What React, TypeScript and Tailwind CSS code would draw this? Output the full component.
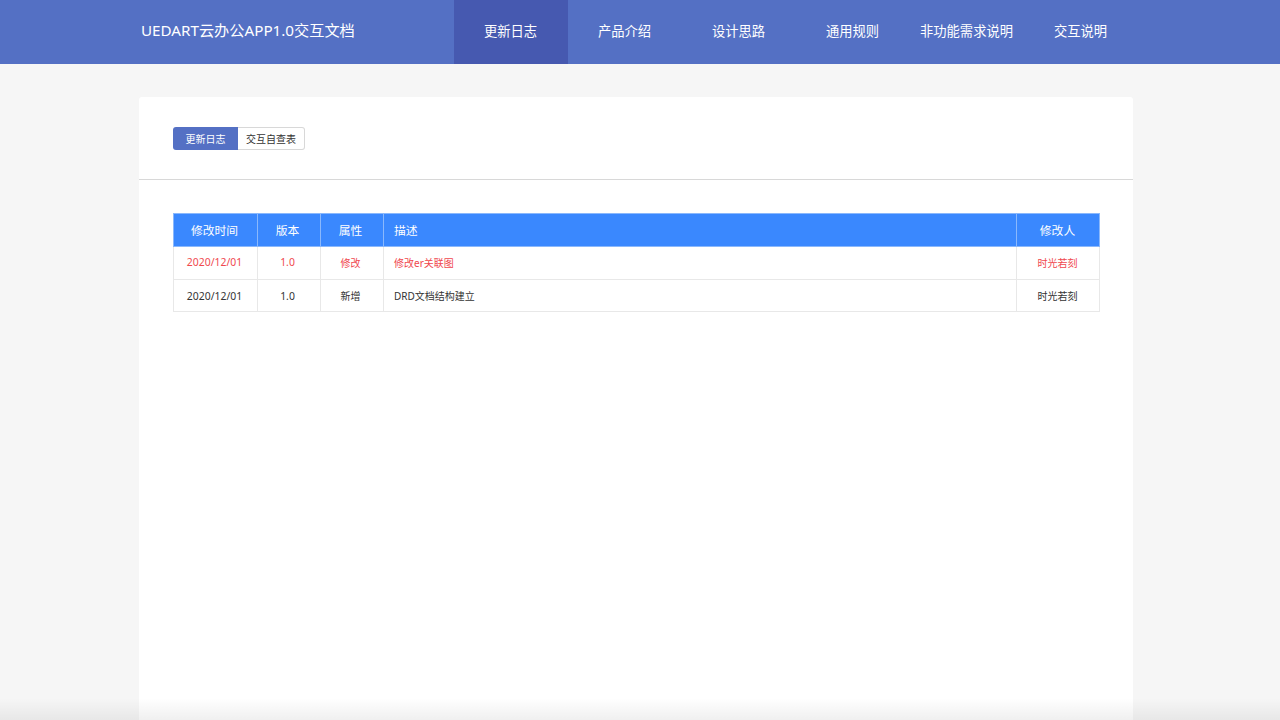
const navItems = ["更新日志", "产品介绍", "设计思路", "通用规则", "非功能需求说明", "交互说明"]

const rows = [
  { date: "2020/12/01", version: "1.0", type: "修改", desc: "修改er关联图", author: "时光若刻", color: "text-[#f0484e]", height: "h-[33px]" },
  { date: "2020/12/01", version: "1.0", type: "新增", desc: "DRD文档结构建立", author: "时光若刻", color: "text-[#333333] [&>td]:pt-[2px]", height: "h-[32px]" },
]

export default function App() {
  return (
    <div className="relative h-[720px] overflow-hidden bg-[#f6f6f6] font-['Noto_Sans','Noto_Sans_CJK_SC',sans-serif]">
      {/* top bar */}
      <header className="flex h-16 bg-[#5470c4] pl-[141px] text-white">
        <div className="w-[312.5px] text-[15.2px] leading-[61px]">UEDART云办公APP1.0交互文档</div>
        <nav className="flex">
          {navItems.map((item, i) => (
            <div
              key={item}
              className={`w-[114px] text-center text-[13.3px] leading-[63px] ${i === 0 ? "bg-[#4659b0]" : ""}`}
            >
              {item}
            </div>
          ))}
        </nav>
      </header>

      {/* card */}
      <main className="ml-[139px] mt-[33px] h-[640px] w-[994px] rounded-t-[3px] bg-white">
        <div className="h-[83px] border-b border-[#d8d8d8] pl-[34px] pt-[30px]">
          <div className="flex h-[23px] w-[132px] text-[10px] leading-[25px]">
            <div className="w-[65px] rounded-l-[3px] bg-[#5470c4] text-center text-white">更新日志</div>
            <div className="w-[67px] rounded-r-[3px] border border-l-0 border-[#d8d8d8] text-center leading-[23px] text-[#333333]">
              交互自查表
            </div>
          </div>
        </div>

        <div className="pl-[34px] pt-[33px]">
          <table className="w-[927px] table-fixed border-collapse text-[10px] text-[#333333]">
            <colgroup>
              <col className="w-[84px]" />
              <col className="w-[63px]" />
              <col className="w-[63px]" />
              <col />
              <col className="w-[83px]" />
            </colgroup>
            <thead>
              <tr className="h-[33px] bg-[#3a88fe] text-[11.8px] text-white">
                <th className="border border-[#8ab8fc] pt-px pr-[2px] font-normal">修改时间</th>
                <th className="border border-[#8ab8fc] pt-px pr-[3px] font-normal">版本</th>
                <th className="border border-[#8ab8fc] pt-px pr-[3px] font-normal">属性</th>
                <th className="border border-[#8ab8fc] pt-px pl-[10px] text-left font-normal">描述</th>
                <th className="border border-[#8ab8fc] pt-px pr-px font-normal">修改人</th>
              </tr>
            </thead>
            <tbody>
              {rows.map((row) => (
                <tr key={row.desc} className={`${row.height} ${row.color}`}>
                  <td className="border border-[#e8e8e8] pr-[2px] text-center text-[10.4px]">{row.date}</td>
                  <td className="border border-[#e8e8e8] pr-[3px] text-center text-[10.4px]">{row.version}</td>
                  <td className="border border-[#e8e8e8] pr-[3px] text-center">{row.type}</td>
                  <td className="border border-[#e8e8e8] pl-[10px]">{row.desc}</td>
                  <td className="border border-[#e8e8e8] pr-px text-center">{row.author}</td>
                </tr>
              ))}
            </tbody>
          </table>
        </div>
      </main>

      {/* fade at the bottom of the window */}
      <div className="pointer-events-none absolute inset-x-0 bottom-0 h-[22px] bg-gradient-to-b from-transparent to-black/[0.06]" />
    </div>
  )
}
